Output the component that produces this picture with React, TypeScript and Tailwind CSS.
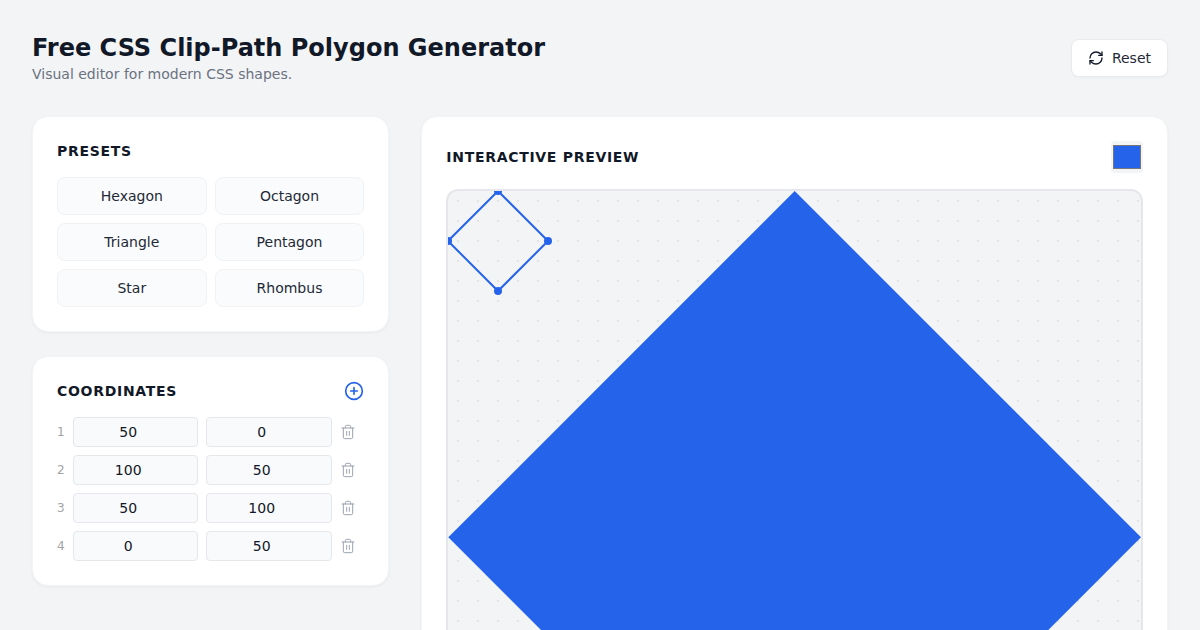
import { CirclePlus, RefreshCw, Trash2 } from "lucide-react";

const presets = ["Hexagon", "Octagon", "Triangle", "Pentagon", "Star", "Rhombus"];

const points = [
  { x: 50, y: 0 },
  { x: 100, y: 50 },
  { x: 50, y: 100 },
  { x: 0, y: 50 },
];

export default function App() {
  return (
    <div className="h-[630px] overflow-hidden bg-[#f3f4f6] p-8 font-['DejaVu_Sans',sans-serif] text-[#111827]">
      <header className="mb-8 flex items-center justify-between">
        <div>
          <h1 className="text-2xl font-bold">Free CSS Clip-Path Polygon Generator</h1>
          <p className="text-sm text-[#6b7280]">Visual editor for modern CSS shapes.</p>
        </div>
        <button className="flex h-[38px] items-center gap-2 rounded-lg border border-[#e9ebee] bg-white px-4 text-sm text-[#1f2937] shadow-[0_1px_2px_rgba(0,0,0,0.03)]">
          <RefreshCw size={16} className="text-[#111827]" />
          Reset
        </button>
      </header>

      <div className="grid grid-cols-3 gap-8">
        <div className="flex flex-col gap-6">
          <section className="rounded-2xl border border-[#f3f4f6] bg-white p-6 shadow-[0_1px_3px_rgba(0,0,0,0.05)]">
            <h2 className="mb-4 text-sm font-bold tracking-wider uppercase">Presets</h2>
            <div className="grid grid-cols-2 gap-2">
              {presets.map((name) => (
                <button
                  key={name}
                  className="h-[38px] rounded-lg border border-[#f0f2f4] bg-[#f9fbfc] text-sm text-[#1f2937]"
                >
                  {name}
                </button>
              ))}
            </div>
          </section>

          <section className="rounded-2xl border border-[#f3f4f6] bg-white p-6 shadow-[0_1px_3px_rgba(0,0,0,0.05)]">
            <div className="mb-4 flex h-5 items-center justify-between">
              <h2 className="text-sm font-bold tracking-wider uppercase">Coordinates</h2>
              <CirclePlus size={20} className="text-[#2563eb]" />
            </div>
            <div className="flex flex-col gap-2">
              {points.map((p, i) => (
                <div key={i} className="flex items-center gap-2 pr-[8.4px]">
                  <span className="w-2 text-xs text-[#a3a3a3]">{i + 1}</span>
                  <input
                    type="number"
                    defaultValue={p.x}
                    className="h-[30px] w-0 flex-1 rounded border border-[#e5e7eb] bg-[#f9fafb] text-center text-sm"
                  />
                  <input
                    type="number"
                    defaultValue={p.y}
                    className="h-[30px] w-0 flex-1 rounded border border-[#e5e7eb] bg-[#f9fafb] text-center text-sm"
                  />
                  <Trash2 size={16} strokeWidth={1.5} className="text-[#9ca3af]" />
                </div>
              ))}
            </div>
          </section>
        </div>

        <section className="col-span-2 rounded-2xl border border-[#f3f4f6] bg-white p-6 shadow-[0_1px_3px_rgba(0,0,0,0.05)]">
          <div className="mb-4 flex items-center justify-between">
            <h2 className="text-sm font-bold tracking-wider uppercase">Interactive Preview</h2>
            <input type="color" defaultValue="#2563eb" className="h-8 w-8 rounded bg-[#f3f4f6]" />
          </div>
          <div className="relative aspect-square w-full overflow-hidden rounded-xl border-2 border-[#e5e7eb] bg-[#f3f4f6] bg-[radial-gradient(#e1e3e7_1px,transparent_1px)] bg-[size:20px_20px]">
            <div className="absolute inset-0 bg-[#2563eb] [clip-path:polygon(50%_0%,100%_50%,50%_100%,0%_50%)]" />
            <svg className="absolute top-0 left-0 overflow-visible" width="100" height="100" viewBox="0 0 100 100">
              <polygon points="50,0 100,50 50,100 0,50" fill="none" stroke="#2563eb" strokeWidth="2" />
              {points.map((p, i) => (
                <circle key={i} cx={p.x} cy={p.y} r="4" fill="#2563eb" />
              ))}
            </svg>
          </div>
        </section>
      </div>
    </div>
  );
}
